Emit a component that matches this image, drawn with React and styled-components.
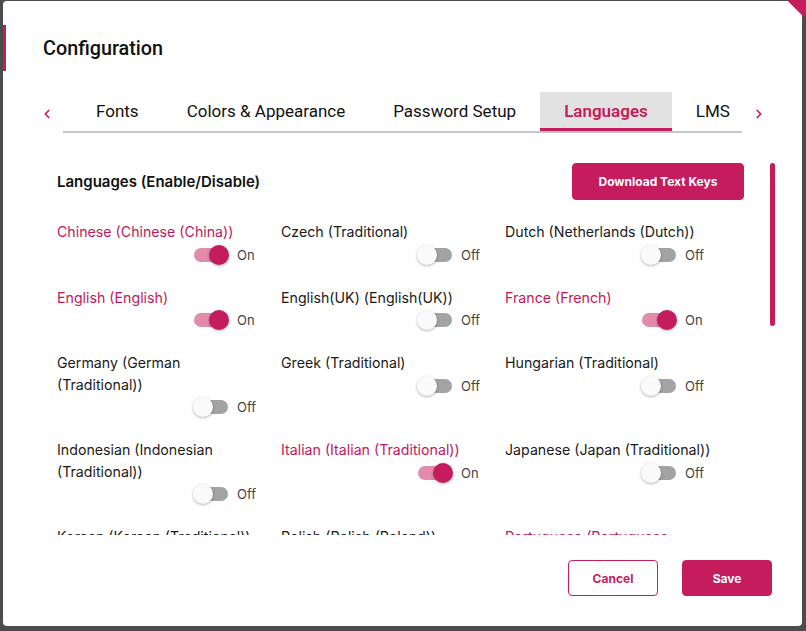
import React from 'react';
import styled, { createGlobalStyle } from 'styled-components';
import { ChevronLeft, ChevronRight } from 'lucide-react';

const PINK = '#c41c5c';

const GlobalStyle = createGlobalStyle`
  * { box-sizing: border-box; }
  html, body {
    margin: 0;
    padding: 0;
    height: 631px;
    overflow: hidden;
    background: #4c4c4c;
  }
  body {
    font-family: Inter, 'Noto Sans', sans-serif;
    color: #1a1a1a;
  }
`;

const Modal = styled.div`
  position: relative;
  margin: 1px 0 0 3px;
  width: 799px;
  height: 625px;
  background: #fff;
  border-radius: 4px;
  display: flex;
  flex-direction: column;
`;

const CornerBadge = styled.div`
  position: absolute;
  top: -20px;
  right: -17px;
  width: 30px;
  height: 30px;
  background: ${PINK};
  transform: rotate(45deg);
`;

const Header = styled.div`
  position: relative;
  padding: 28px 0 0 40px;

  &::before {
    content: '';
    position: absolute;
    left: 0;
    top: 24px;
    width: 3px;
    height: 46px;
    background: ${PINK};
  }
`;

const Title = styled.h1`
  margin: 0;
  font-family: Roboto, 'Liberation Sans', sans-serif;
  font-size: 19.8px;
  font-weight: 500;
  line-height: 40px;
  color: #111;
`;

const TabsRow = styled.div`
  display: flex;
  align-items: center;
  margin-top: 23px;
  padding-left: 37px;
`;

const Arrow = styled.button`
  width: 14px;
  height: 20px;
  padding: 0;
  border: none;
  background: none;
  color: ${PINK};
  display: flex;
  align-items: center;
  justify-content: center;
  margin-top: 2px;
`;

const TabStrip = styled.div`
  width: 679px;
  margin: 0 10px 0 9px;
  padding-left: 9px;
  display: flex;
  border-bottom: 2px solid #c6c6c6;
  overflow: hidden;
`;

const Tab = styled.div`
  height: 39px;
  padding: 2px 24px 0;
  display: flex;
  align-items: center;
  white-space: nowrap;
  font-family: Roboto, 'Liberation Sans', sans-serif;
  font-size: 17px;
  font-weight: ${(p) => (p.$active ? 600 : 400)};
  color: ${(p) => (p.$active ? PINK : '#111')};
  background: ${(p) => (p.$active ? '#e2e2e2' : 'transparent')};
  border-bottom: 3px solid ${(p) => (p.$active ? PINK : 'transparent')};
`;

const Body = styled.div`
  display: flex;
  margin-top: 7px;
  height: 395px;
  padding-left: 54px;
  gap: 26px;
`;

const Content = styled.div`
  width: 687px;
  padding-top: 23px;
  overflow: hidden;
`;

const ScrollTrack = styled.div`
  width: 5px;
  padding-top: 23px;
`;

const ScrollThumb = styled.div`
  width: 5px;
  height: 163px;
  border-radius: 3px;
  background: ${PINK};
`;

const SectionHead = styled.div`
  display: flex;
  align-items: center;
  justify-content: space-between;
`;

const SectionTitle = styled.h2`
  margin: 0;
  font-size: 15px;
  font-weight: 600;
  color: #111;
`;

const Button = styled.button`
  height: ${(p) => p.$h || 36}px;
  width: ${(p) => p.$w}px;
  border-radius: 4px;
  font-family: Inter, 'Liberation Sans', sans-serif;
  font-size: 12px;
  font-weight: 700;
  cursor: pointer;
  border: 1px solid ${PINK};
  background: ${(p) => (p.$outline ? '#fff' : PINK)};
  color: ${(p) => (p.$outline ? PINK : '#fff')};
`;

const Grid = styled.div`
  display: grid;
  grid-template-columns: repeat(3, 224px);
  row-gap: 20px;
  margin-top: 21px;
  align-items: start;
`;

const Item = styled.div`
  display: flex;
  flex-direction: column;
`;

const Label = styled.div`
  font-size: 14.2px;
  line-height: 21.5px;
  max-width: ${(p) => p.$max || 224}px;
  color: ${(p) => (p.$on ? '#c2185b' : '#1a1a1a')};
`;

const ToggleRow = styled.div`
  height: 24px;
  display: flex;
  align-items: center;
  gap: 8px;
  padding-left: 136px;
`;

const Switch = styled.div`
  position: relative;
  width: 36px;
  height: 20px;
`;

const Track = styled.div`
  position: absolute;
  left: 1px;
  top: 3px;
  width: 34px;
  height: 14px;
  border-radius: 7px;
  background: ${(p) => (p.$on ? '#e38bab' : '#a3a3a3')};
`;

const Knob = styled.div`
  position: absolute;
  top: 0;
  left: ${(p) => (p.$on ? 16 : 0)}px;
  width: 20px;
  height: 20px;
  border-radius: 50%;
  background: ${(p) => (p.$on ? PINK : '#fafafa')};
  box-shadow: 0 1px 3px rgba(0, 0, 0, 0.3);
`;

const State = styled.span`
  font-size: 13px;
  color: #444;
`;

const Footer = styled.div`
  display: flex;
  justify-content: flex-end;
  gap: 24px;
  margin-top: 25px;
  padding-right: 30px;
`;

const tabs = ['Fonts', 'Colors & Appearance', 'Password Setup', 'Languages', 'LMS'];

const languages = [
  ['Chinese (Chinese (China))', true],
  ['Czech (Traditional)', false],
  ['Dutch (Netherlands (Dutch))', false],
  ['English (English)', true],
  ['English(UK) (English(UK))', false],
  ['France (French)', true],
  ['Germany (German (Traditional))', false, 190],
  ['Greek (Traditional)', false],
  ['Hungarian (Traditional)', false],
  ['Indonesian (Indonesian (Traditional))', false],
  ['Italian (Italian (Traditional))', true],
  ['Japanese (Japan (Traditional))', false],
  ['Korean (Korean (Traditional))', false],
  ['Polish (Polish (Poland))', false],
  ['Portuguese (Portuguese (Portugal))', true],
];

const LanguageToggle = ({ name, on, max }) => (
  <Item>
    <Label $on={on} $max={max}>{name}</Label>
    <ToggleRow>
      <Switch>
        <Track $on={on} />
        <Knob $on={on} />
      </Switch>
      <State>{on ? 'On' : 'Off'}</State>
    </ToggleRow>
  </Item>
);

export default function App() {
  return (
    <>
      <GlobalStyle />
      <Modal>
        <CornerBadge />
        <Header>
          <Title>Configuration</Title>
        </Header>
        <TabsRow>
          <Arrow aria-label="previous">
            <ChevronLeft size={16} strokeWidth={3} />
          </Arrow>
          <TabStrip>
            {tabs.map((t) => (
              <Tab key={t} $active={t === 'Languages'}>
                {t}
              </Tab>
            ))}
          </TabStrip>
          <Arrow aria-label="next">
            <ChevronRight size={16} strokeWidth={3} />
          </Arrow>
        </TabsRow>
        <Body>
          <Content>
            <SectionHead>
              <SectionTitle>Languages (Enable/Disable)</SectionTitle>
              <Button $w={172} $h={37}>Download Text Keys</Button>
            </SectionHead>
            <Grid>
              {languages.map(([name, on, max]) => (
                <LanguageToggle key={name} name={name} on={on} max={max} />
              ))}
            </Grid>
          </Content>
          <ScrollTrack>
            <ScrollThumb />
          </ScrollTrack>
        </Body>
        <Footer>
          <Button $outline $w={90}>Cancel</Button>
          <Button $w={90}>Save</Button>
        </Footer>
      </Modal>
    </>
  );
}
